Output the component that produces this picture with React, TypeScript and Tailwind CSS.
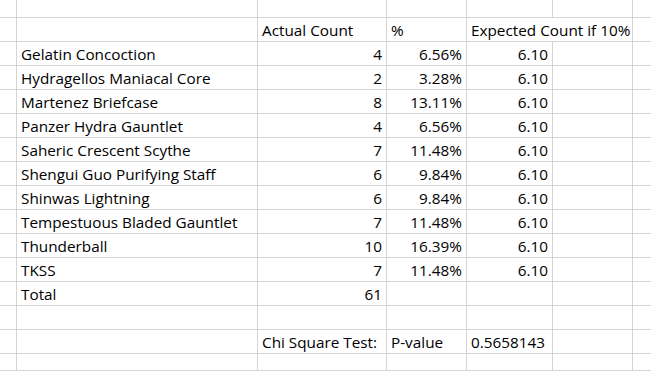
import React from 'react';

type Cell = { text?: string; align?: 'left' | 'right'; overflow?: boolean };

const rows: Cell[][] = [
  [{}, {}, {}, {}, {}, {}],
  [{}, { text: 'Actual Count' }, { text: '%' }, { text: 'Expected Count if 10%', overflow: true }, {}, {}],
  ...[
    ['Gelatin Concoction', '4', '6.56%'],
    ['Hydragellos Maniacal Core', '2', '3.28%'],
    ['Martenez Briefcase', '8', '13.11%'],
    ['Panzer Hydra Gauntlet', '4', '6.56%'],
    ['Saheric Crescent Scythe', '7', '11.48%'],
    ['Shengui Guo Purifying Staff', '6', '9.84%'],
    ['Shinwas Lightning', '6', '9.84%'],
    ['Tempestuous Bladed Gauntlet', '7', '11.48%'],
    ['Thunderball', '10', '16.39%'],
    ['TKSS', '7', '11.48%'],
  ].map(([name, count, pct]) => [
    { text: name },
    { text: count, align: 'right' as const },
    { text: pct, align: 'right' as const },
    { text: '6.10', align: 'right' as const },
    {},
    {},
  ]),
  [{ text: 'Total' }, { text: '61', align: 'right' }, {}, {}, {}, {}],
  [{}, {}, {}, {}, {}, {}],
  [{}, { text: 'Chi Square Test:' }, { text: 'P-value' }, { text: '0.5658143' }, {}, {}],
  [{}, {}, {}, {}, {}, {}],
];

const colWidths = ['w-[241px]', 'w-[129px]', 'w-[80px]', 'w-[86px]', 'w-[80px]'];

function Row({ cells, first, last }: { cells: Cell[]; first?: boolean; last?: boolean }) {
  const h = first ? 'h-[18px]' : last ? 'flex-1' : 'h-[24px]';
  const hideNext = cells.findIndex((c) => c.overflow);
  return (
    <div className={`flex ${h} shrink-0`}>
      <div className="w-[17px] shrink-0 border-r border-b border-[#d4d4d4]" />
      {cells.slice(0, 5).map((c, i) => (
        <div
          key={i}
          className={`${colWidths[i]} shrink-0 border-b border-[#d4d4d4] ${
            i === hideNext ? 'border-r-0 overflow-visible relative z-10' : 'border-r overflow-hidden'
          } flex items-end pb-[2px] ${c.align === 'right' ? 'justify-end pr-[4px]' : 'pl-[4px]'}`}
        >
          {c.text && <span className="whitespace-nowrap leading-[18px]">{c.text}</span>}
        </div>
      ))}
      <div className="flex-1 border-b border-[#d4d4d4]" />
    </div>
  );
}

export default function App() {
  return (
    <div className="w-[651px] h-[371px] bg-white overflow-hidden flex flex-col text-[#000] text-[15.3px] font-['Open_Sans','Liberation_Sans',sans-serif]">
      {rows.map((r, i) => (
        <Row key={i} cells={r} first={i === 0} last={i === rows.length - 1} />
      ))}
    </div>
  );
}
